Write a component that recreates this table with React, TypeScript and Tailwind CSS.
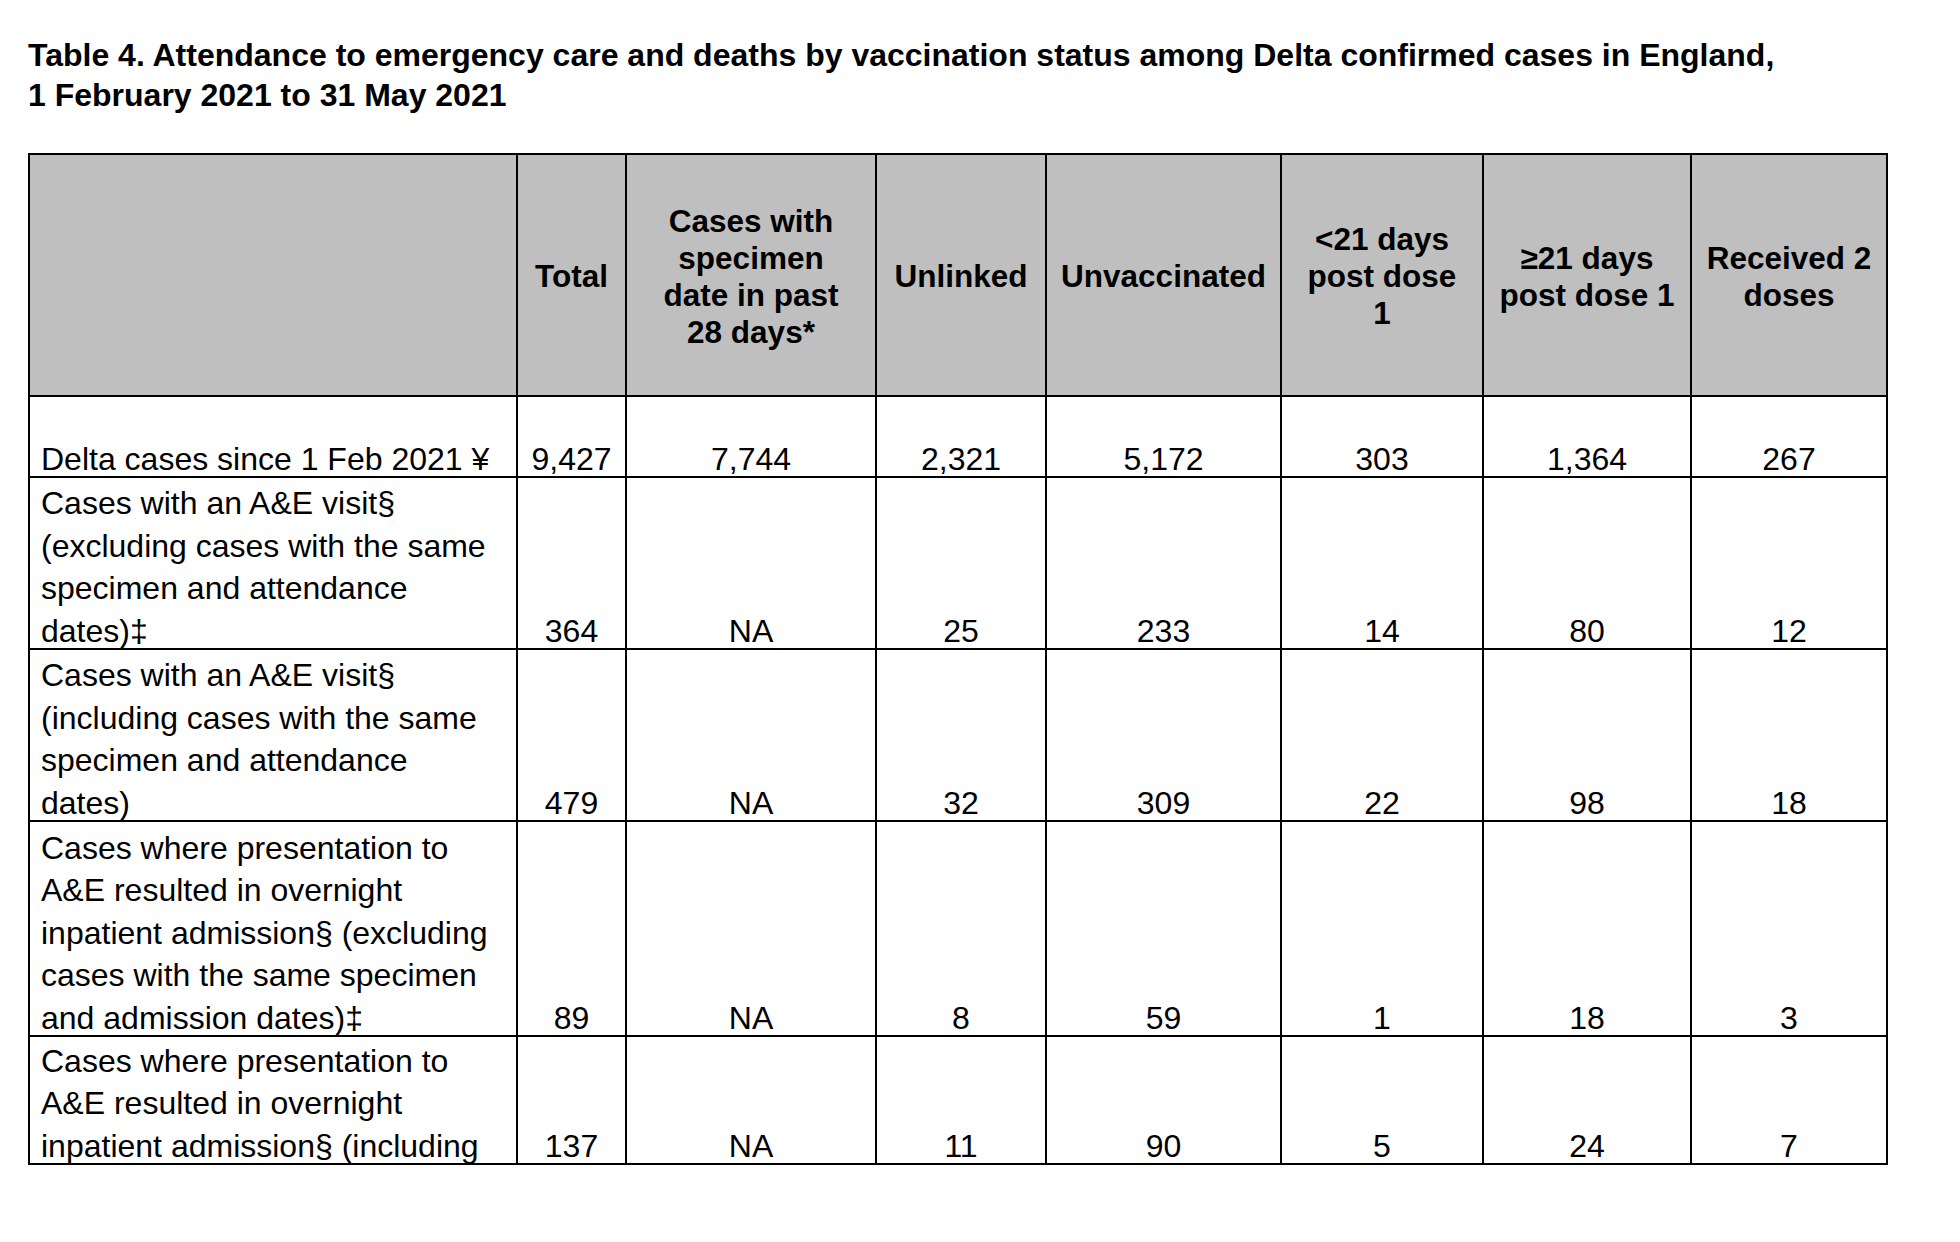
const FONT = "font-['Liberation_Sans',Arial,sans-serif]";

const headers = [
  { label: [], w: "w-[488px]" },
  { label: ["Total"], w: "w-[109px]" },
  { label: ["Cases with", "specimen", "date in past", "28 days*"], w: "w-[250px]" },
  { label: ["Unlinked"], w: "w-[170px]" },
  { label: ["Unvaccinated"], w: "w-[235px]" },
  { label: ["<21 days", "post dose", "1"], w: "w-[202px]" },
  { label: ["≥21 days", "post dose 1"], w: "w-[208px]" },
  { label: ["Received 2", "doses"], w: "w-[196px]" },
];

const rows = [
  {
    label: ["Delta cases since 1 Feb 2021 ¥"],
    h: "h-[81px]",
    values: ["9,427", "7,744", "2,321", "5,172", "303", "1,364", "267"],
  },
  {
    label: ["Cases with an A&E visit§", "(excluding cases with the same", "specimen and attendance", "dates)‡"],
    h: "h-[172px]",
    values: ["364", "NA", "25", "233", "14", "80", "12"],
  },
  {
    label: ["Cases with an A&E visit§", "(including cases with the same", "specimen and attendance", "dates)"],
    h: "h-[172px]",
    values: ["479", "NA", "32", "309", "22", "98", "18"],
  },
  {
    label: [
      "Cases where presentation to",
      "A&E resulted in overnight",
      "inpatient admission§ (excluding",
      "cases with the same specimen",
      "and admission dates)‡",
    ],
    h: "h-[215px]",
    values: ["89", "NA", "8", "59", "1", "18", "3"],
  },
  {
    label: ["Cases where presentation to", "A&E resulted in overnight", "inpatient admission§ (including"],
    h: "h-[128px]",
    values: ["137", "NA", "11", "90", "5", "24", "7"],
  },
];

const Lines = ({ lines }: { lines: string[] }) => (
  <>
    {lines.map((l, i) => (
      <div key={i} className="whitespace-nowrap">
        {l}
      </div>
    ))}
  </>
);

export default function App() {
  return (
    <div className={`min-h-screen bg-white text-black ${FONT} pl-[28px] pt-[35px]`}>
      <h1 className="text-[32px] leading-[40px] font-bold">
        Table 4. Attendance to emergency care and deaths by vaccination status among Delta confirmed cases in England,
        <br />1 February 2021 to 31 May 2021
      </h1>

      <table className="mt-[38px] w-[1860px] table-fixed border-separate border-spacing-0 border-l-2 border-t-2 border-black">
        <thead>
          <tr className="h-[242px]">
            {headers.map((h, i) => (
              <th
                key={i}
                className={`${h.w} border-r-2 border-b-2 border-black bg-[#bfbfbf] p-0 pt-[3px] text-center align-middle text-[31.5px] leading-[37px] font-bold`}
              >
                <Lines lines={h.label} />
              </th>
            ))}
          </tr>
        </thead>
        <tbody>
          {rows.map((r, ri) => (
            <tr key={ri} className={r.h}>
              <td className="border-r-2 border-b-2 border-black p-0 pl-[11px] align-bottom text-left text-[32px] leading-[42.5px]">
                <div className="-mb-[4px]">
                  <Lines lines={r.label} />
                </div>
              </td>
              {r.values.map((v, vi) => (
                <td
                  key={vi}
                  className="border-r-2 border-b-2 border-black p-0 align-bottom text-center text-[32px] leading-[42.5px]"
                >
                  <div className="-mb-[4px]">{v}</div>
                </td>
              ))}
            </tr>
          ))}
        </tbody>
      </table>
    </div>
  );
}
